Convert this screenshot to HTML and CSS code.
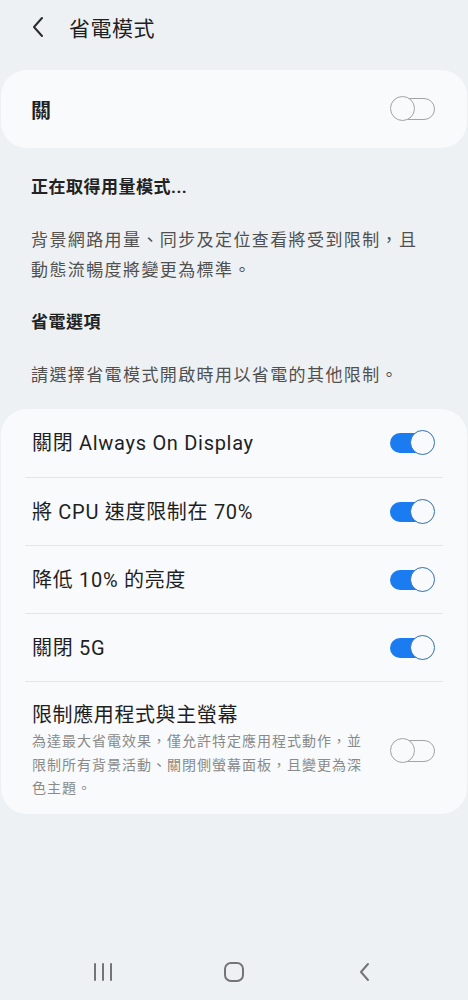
FILE: index.html
```html
<!DOCTYPE html>
<html lang="zh-Hant">

<head>
    <meta charset="UTF-8">
    <meta name="viewport" content="width=device-width, initial-scale=1.0">
    <title>省電模式</title>
    <link rel="stylesheet" href="styles.css">
</head>

<body>
    <!-- Top bar -->
    <header class="topbar">
        <svg class="back" width="14" height="22" viewBox="0 0 14 22">
            <path d="M11 2 L3 11 L11 20" fill="none" stroke="#2b2b2b" stroke-width="2" stroke-linecap="round" stroke-linejoin="round"/>
        </svg>
        <span class="title">省電模式</span>
    </header>

    <!-- Master switch -->
    <div class="card master">
        <span class="master-label">關</span>
        <span class="toggle"></span>
    </div>

    <div class="info">
        <h2>正在取得用量模式...</h2>
        <p>背景網路用量、同步及定位查看將受到限制，且動態流暢度將變更為標準。</p>
        <h2>省電選項</h2>
        <p>請選擇省電模式開啟時用以省電的其他限制。</p>
    </div>

    <!-- Options -->
    <div class="card options">
        <div class="row first">
            <span class="row-title">關閉 Always On Display</span>
            <span class="toggle on"></span>
        </div>
        <div class="row">
            <span class="row-title">將 CPU 速度限制在 70%</span>
            <span class="toggle on"></span>
        </div>
        <div class="row">
            <span class="row-title">降低 10% 的亮度</span>
            <span class="toggle on"></span>
        </div>
        <div class="row">
            <span class="row-title">關閉 5G</span>
            <span class="toggle on"></span>
        </div>
        <div class="row last">
            <div class="row-text">
                <span class="row-title">限制應用程式與主螢幕</span>
                <span class="row-desc">為達最大省電效果，僅允許特定應用程式動作，並限制所有背景活動、關閉側螢幕面板，且變更為深色主題。</span>
            </div>
            <span class="toggle"></span>
        </div>
    </div>

    <!-- Navigation bar -->
    <nav class="navbar">
        <svg width="22" height="20" viewBox="0 0 22 20">
            <path d="M3 2 V18 M11 2 V18 M19 2 V18" stroke="#747474" stroke-width="2" stroke-linecap="round"/>
        </svg>
        <svg width="22" height="22" viewBox="0 0 22 22">
            <rect x="2" y="2" width="18" height="18" rx="6" fill="none" stroke="#747474" stroke-width="2"/>
        </svg>
        <svg width="14" height="20" viewBox="0 0 14 20">
            <path d="M10 2 L3 10 L10 18" fill="none" stroke="#747474" stroke-width="2" stroke-linecap="round" stroke-linejoin="round"/>
        </svg>
    </nav>
</body>

</html>
```

FILE: styles.css
```css
body {
    margin: 0;
    width: 468px;
    height: 1000px;
    background-color: #eef1f3;
    font-family: Roboto, "Noto Sans CJK TC", sans-serif;
    color: #1f1f1f;
    display: flex;
    flex-direction: column;
    overflow: hidden;
}

/* Top bar */
.topbar {
    height: 54px;
    display: flex;
    align-items: center;
    padding-left: 31px;
}

.back {
    margin-right: 24px;
}

.title {
    font-size: 21px;
    letter-spacing: 0.5px;
    color: #202020;
}

/* Cards */
.card {
    background-color: #f8fafb;
    border-radius: 26px;
    margin: 0 1px;
}

.master {
    margin-top: 16px;
    height: 78px;
    display: flex;
    align-items: center;
    justify-content: space-between;
    padding: 0 32px 0 30px;
}

.master-label {
    font-size: 20px;
    font-weight: 700;
}

/* Info texts */
.info {
    padding: 24px 40px 19px 31px;
}

.info h2 {
    font-size: 17px;
    font-weight: 700;
    line-height: 30px;
    margin: 0 0 23px;
    letter-spacing: 0.5px;
    color: #222;
}

.info p {
    font-size: 17px;
    line-height: 30px;
    margin: 0 0 22px;
    letter-spacing: 1.4px;
    color: #505050;
}

.info p:last-child {
    margin-bottom: 0;
}

/* Options list */
.options {
    padding: 0 24px;
}

.row {
    min-height: 67px;
    display: flex;
    align-items: center;
    justify-content: space-between;
    padding: 0 8px 0 7px;
    border-bottom: 1px solid #e3e6e8;
}

.row.first {
    min-height: 68px;
}

.row.last {
    border-bottom: none;
    padding-top: 20px;
    padding-bottom: 13px;
}

.row-title {
    font-size: 20px;
    line-height: 26px;
    letter-spacing: 0.7px;
    color: #1f1f1f;
}

.row-text {
    display: flex;
    flex-direction: column;
    width: 340px;
}

.row-text .row-title {
    letter-spacing: 0.6px;
}

.row-desc {
    margin-top: 2px;
    font-size: 14px;
    line-height: 23.5px;
    letter-spacing: 1px;
    color: #8a8a8a;
}

/* Switches */
.toggle {
    position: relative;
    flex-shrink: 0;
    width: 45px;
    height: 26px;
}

.toggle::before {
    content: "";
    position: absolute;
    left: 8px;
    right: 0;
    top: 2px;
    bottom: 2px;
    border: 1.5px solid #a3a3a3;
    border-radius: 12px;
}

.toggle::after {
    content: "";
    position: absolute;
    left: 0;
    top: 0;
    width: 23px;
    height: 23px;
    border: 1.5px solid #a3a3a3;
    border-radius: 50%;
    background-color: #f8fafb;
}

.toggle.on::before {
    left: 0;
    right: 8px;
    top: 3px;
    bottom: 3px;
    border: none;
    background-color: #1a7cf0;
}

.toggle.on::after {
    left: auto;
    right: 0;
    border-color: #2f6fb8;
}

/* Navigation bar */
.navbar {
    margin-top: auto;
    height: 56px;
    display: grid;
    grid-template-columns: 131px 131px 131px;
    justify-content: center;
    justify-items: center;
    align-items: center;
}
```
